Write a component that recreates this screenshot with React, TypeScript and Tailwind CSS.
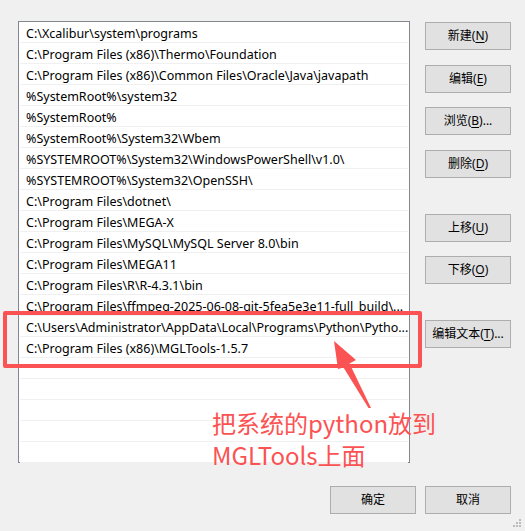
import React from "react";

const rows: string[] = [
  "C:\\Xcalibur\\system\\programs",
  "C:\\Program Files (x86)\\Thermo\\Foundation",
  "C:\\Program Files (x86)\\Common Files\\Oracle\\Java\\javapath",
  "%SystemRoot%\\system32",
  "%SystemRoot%",
  "%SystemRoot%\\System32\\Wbem",
  "%SYSTEMROOT%\\System32\\WindowsPowerShell\\v1.0\\",
  "%SYSTEMROOT%\\System32\\OpenSSH\\",
  "C:\\Program Files\\dotnet\\",
  "C:\\Program Files\\MEGA-X",
  "C:\\Program Files\\MySQL\\MySQL Server 8.0\\bin",
  "C:\\Program Files\\MEGA11",
  "C:\\Program Files\\R\\R-4.3.1\\bin",
  "C:\\Program Files\\ffmpeg-2025-06-08-git-5fea5e3e11-full_build\\...",
  "C:\\Users\\Administrator\\AppData\\Local\\Programs\\Python\\Pytho...",
  "C:\\Program Files (x86)\\MGLTools-1.5.7",
  "",
  "",
  "",
  "",
  "",
];

const font = {
  fontFamily: '"Noto Sans", "Noto Sans CJK SC", sans-serif',
};

function Btn({ label, k, suffix = "" }: { label: string; k?: string; suffix?: string }) {
  return (
    <div className="flex h-[28px] w-[86px] items-center justify-center border border-[#adadad] bg-[#e1e1e1] text-[12px] text-black">
      <span>
        {label}
        {k ? (
          <>
            (<span className="underline underline-offset-2">{k}</span>)
          </>
        ) : null}
        {suffix}
      </span>
    </div>
  );
}

export default function App() {
  return (
    <div
      className="relative h-[531px] w-[525px] overflow-hidden bg-[#f0f0f0]"
      style={font}
    >
      <div className="flex">
        {/* list */}
        <div className="ml-[18px] mt-[21px] h-[442px] w-[392px] border border-[#828790] bg-white px-[1px]">
          {rows.map((r, i) => (
            <div
              key={i}
              className="flex h-[21px] items-center overflow-hidden whitespace-nowrap border-b border-[#f0f0f0] pl-[6px] pt-[4px] text-[12.5px] text-black"
            >
              {r}
            </div>
          ))}
        </div>
        {/* right buttons */}
        <div className="ml-[15px] mt-[22px] flex flex-col">
          <Btn label="新建" k="N" />
          <div className="h-[15px]" />
          <Btn label="编辑" k="E" />
          <div className="h-[14px]" />
          <Btn label="浏览" k="B" suffix="..." />
          <div className="h-[15px]" />
          <Btn label="删除" k="D" />
          <div className="h-[36px]" />
          <Btn label="上移" k="U" />
          <div className="h-[14px]" />
          <Btn label="下移" k="O" />
          <div className="h-[36px]" />
          <Btn label="编辑文本" k="T" suffix="..." />
        </div>
      </div>

      {/* bottom buttons */}
      <div className="mt-[23px] flex justify-end gap-[9px] pr-[14px]">
        <Btn label="确定" />
        <Btn label="取消" />
      </div>

      {/* resize grip */}
      <svg className="absolute bottom-[3px] right-[3px]" width="10" height="10" viewBox="0 0 10 10">
        <rect x="7" y="1" width="2" height="2" fill="#bcbcbc" />
        <rect x="4" y="4" width="2" height="2" fill="#bcbcbc" />
        <rect x="7" y="4" width="2" height="2" fill="#bcbcbc" />
        <rect x="1" y="7" width="2" height="2" fill="#bcbcbc" />
        <rect x="4" y="7" width="2" height="2" fill="#bcbcbc" />
        <rect x="7" y="7" width="2" height="2" fill="#bcbcbc" />
      </svg>

      {/* red annotation box */}
      <div className="absolute left-[3px] top-[311px] h-[57px] w-[419px] rounded-[2px] border-[4px] border-[#fb5353]" />

      {/* arrow */}
      <svg className="absolute left-0 top-0" width="525" height="531" viewBox="0 0 525 531">
        <polygon
          points="334,341 356,360 349.5,363.5 371,408 368.5,408 343.5,367.5 338,369"
          fill="#fb5353"
        />
      </svg>

      {/* annotation text */}
      <div
        className="absolute left-[212px] top-[407px] text-[24px] leading-[32px] text-[#fb5353]"
        style={{ fontFamily: '"Noto Sans CJK SC", sans-serif' }}
      >
        <div>把系统的python放到</div>
        <div>MGLTools上面</div>
      </div>
    </div>
  );
}
